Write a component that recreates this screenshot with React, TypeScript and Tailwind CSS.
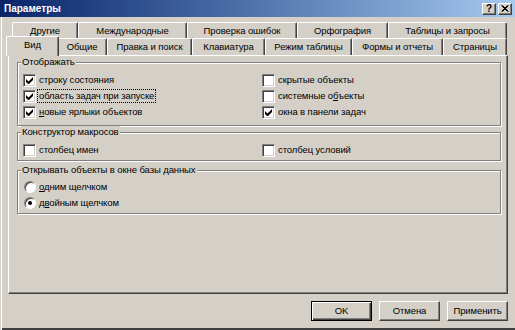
import type { ReactNode } from 'react';

const bevelOut =
  'border border-t-white border-l-white border-r-[#404040] border-b-[#404040] shadow-[inset_-1px_-1px_0_#808080]';

function Tab({ label, className }: { label: string; className: string }) {
  return (
    <div
      className={`flex shrink-0 items-center justify-center rounded-t-[2px] border-t border-l border-r border-t-white border-l-white border-r-[#404040] shadow-[inset_-1px_0_0_#808080] ${className}`}
    >
      {label}
    </div>
  );
}

function Group({ title, className, children }: { title: string; className: string; children: ReactNode }) {
  return (
    <div
      className={`relative border border-[#808080] shadow-[inset_1px_1px_0_#fff,1px_1px_0_#fff] ${className}`}
    >
      <span className="absolute -top-[7px] left-[3px] bg-[#d4d0c8] px-[1px] leading-[12px]">{title}</span>
      {children}
    </div>
  );
}

function Check({ checked, children, focus }: { checked?: boolean; children: ReactNode; focus?: boolean }) {
  return (
    <div className="flex h-[16px] items-center gap-[2px]">
      <span className="flex h-[13px] w-[13px] shrink-0 items-center justify-center border border-t-[#808080] border-l-[#808080] border-r-white border-b-white bg-white shadow-[inset_1px_1px_0_#404040,inset_-1px_-1px_0_#d4d0c8]">
        {checked && (
          <svg width="7" height="7" viewBox="0 0 7 7">
            <path d="M0 2v3l2 2h1l4-4V0L2.5 4.5z" fill="#000" />
          </svg>
        )}
      </span>
      <span className={`px-[1px] leading-[12px] ${focus ? 'outline-1 outline-dotted outline-black' : ''}`}>
        {children}
      </span>
    </div>
  );
}

function Radio({ checked, children }: { checked?: boolean; children: ReactNode }) {
  return (
    <div className="flex h-[16px] items-center gap-[3px]">
      <span className="flex h-[12px] w-[12px] shrink-0 items-center justify-center rounded-full border border-t-[#808080] border-l-[#808080] border-r-white border-b-white bg-white shadow-[inset_1px_1px_0_#404040]">
        {checked && <span className="h-[4px] w-[4px] rounded-full bg-black" />}
      </span>
      <span className="leading-[12px]">{children}</span>
    </div>
  );
}

function Button({ label, primary }: { label: ReactNode; primary?: boolean }) {
  return (
    <button
      className={`flex h-[20px] w-[61px] items-center justify-center bg-[#d4d0c8] ${
        primary
          ? 'border border-black shadow-[inset_1px_1px_0_#fff,inset_-1px_-1px_0_#404040,inset_-2px_-2px_0_#808080]'
          : bevelOut
      }`}
    >
      {label}
    </button>
  );
}

export default function App() {
  return (
    <div className="flex h-[330px] w-[515px] flex-col bg-[#d4d0c8] font-['Liberation_Sans',Arial,sans-serif] text-[9.5px] tracking-[-0.1px] text-black shadow-[inset_1px_0_0_#d4d0c8,inset_2px_0_0_#fff,inset_0_-2px_0_#404040]">
      <div className="flex h-[17px] shrink-0 items-center justify-between bg-linear-to-r from-[#0a246a] to-[#a6caf0] pl-[4px] pr-[3px]">
        <span className="text-[10px] font-bold tracking-normal text-white">Параметры</span>
        <div className="flex gap-[2px]">
          <span className={`flex h-[12px] w-[14px] items-center justify-center bg-[#d4d0c8] text-[10px] font-bold leading-none ${bevelOut}`}>
            ?
          </span>
          <span className={`flex h-[12px] w-[14px] items-center justify-center bg-[#d4d0c8] ${bevelOut}`}>
            <svg width="8" height="7" viewBox="0 0 8 7">
              <path d="M0.5 0.5l6 6M1.5 0.5l6 6M6.5 0.5l-6 6M7.5 0.5l-6 6" stroke="#000" strokeWidth="1" />
            </svg>
          </span>
        </div>
      </div>

      <div className="mt-[5px] pl-[8px]">
        <div className="flex h-[16px] items-start pl-[4px]">
          <Tab label="Другие" className="h-[18px] w-[66px] pb-[1px]" />
          <Tab label="Международные" className="h-[18px] w-[109px] pb-[1px]" />
          <Tab label="Проверка ошибок" className="h-[18px] w-[110px] pb-[1px]" />
          <Tab label="Орфография" className="h-[18px] w-[91px] pb-[1px]" />
          <Tab label="Таблицы и запросы" className="h-[18px] w-[119px] pb-[1px]" />
        </div>
        <div className="relative flex h-[17px] items-start">
          <Tab label="Вид" className="relative z-10 -mx-[2px] -mt-[2px] h-[20px] w-[53px] bg-[#d4d0c8] pb-[2px]" />
          <Tab label="Общие" className="h-[17px] w-[50px] bg-[#d4d0c8]" />
          <Tab label="Правка и поиск" className="h-[17px] w-[85px] bg-[#d4d0c8]" />
          <Tab label="Клавиатура" className="h-[17px] w-[73px] bg-[#d4d0c8]" />
          <Tab label="Режим таблицы" className="h-[17px] w-[87px] bg-[#d4d0c8]" />
          <Tab label="Формы и отчеты" className="h-[17px] w-[91px] bg-[#d4d0c8]" />
          <Tab label="Страницы" className="h-[17px] w-[64px] bg-[#d4d0c8]" />
        </div>

        <div className="flex h-[239px] w-[500px] flex-col border border-t-white border-l-white border-r-[#404040] border-b-[#404040] pl-[8px] pr-[6px] pt-[6px] shadow-[inset_-1px_-1px_0_#808080]">
          <Group title="Отображать" className="h-[64px] pl-[5px] pt-[9px]">
            <div className="grid grid-cols-[239px_1fr]">
              <Check checked>строку состояния</Check>
              <Check>скрытые объекты</Check>
              <Check checked focus>
                область задач при запуске
              </Check>
              <Check>
                системные о<span className="underline">б</span>ъекты
              </Check>
              <Check checked>
                <span className="underline">н</span>овые ярлыки объектов
              </Check>
              <Check checked>окна в панели задач</Check>
            </div>
          </Group>

          <Group title="Конструктор макросов" className="mt-[6px] h-[29px] pl-[5px] pt-[9px]">
            <div className="grid grid-cols-[239px_1fr]">
              <Check>столбец имен</Check>
              <Check>столбец условий</Check>
            </div>
          </Group>

          <Group title="Открывать объекты в окне базы данных" className="mt-[9px] h-[44px] pl-[6px] pt-[8px]">
            <Radio>
              <span className="underline">о</span>дним щелчком
            </Radio>
            <Radio checked>
              <span className="underline">дв</span>ойным щелчком
            </Radio>
          </Group>
        </div>
      </div>

      <div className="mt-[7px] flex justify-end gap-[7px] pr-[7px]">
        <Button label="OK" primary />
        <Button label="Отмена" />
        <Button label="Применить" />
      </div>
    </div>
  );
}
